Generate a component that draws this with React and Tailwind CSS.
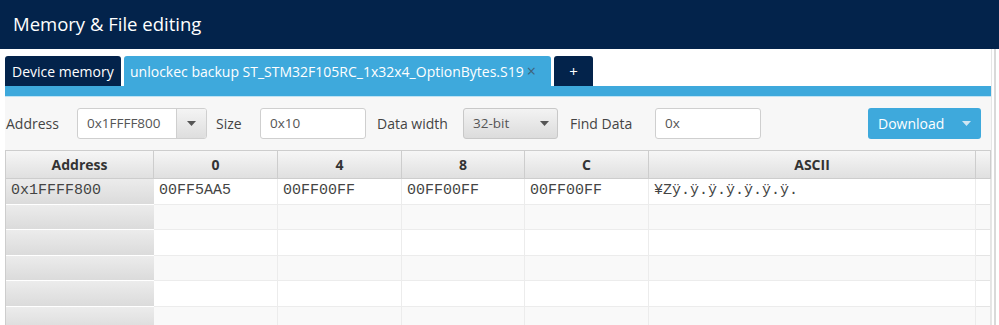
import React from 'react';

const cols = [
  { key: 'addr', label: 'Address', w: 'w-[148px]' },
  { key: 'c0', label: '0', w: 'w-[124px]' },
  { key: 'c4', label: '4', w: 'w-[124px]' },
  { key: 'c8', label: '8', w: 'w-[123px]' },
  { key: 'cC', label: 'C', w: 'w-[124px]' },
  { key: 'ascii', label: 'ASCII', w: 'w-[327px]' },
];

const rows = [
  { addr: '0x1FFFF800', c0: '00FF5AA5', c4: '00FF00FF', c8: '00FF00FF', cC: '00FF00FF', ascii: '¥Zÿ.ÿ.ÿ.ÿ.ÿ.ÿ.ÿ.' },
  {}, {}, {}, {}, {},
];

const Caret = ({ className = '' }) => (
  <svg width="9" height="5" viewBox="0 0 9 5" className={className}>
    <path d="M0 0 H9 L4.5 5 Z" fill="currentColor" />
  </svg>
);

const App = () => {
  return (
    <div className="w-[999px] h-[325px] overflow-hidden bg-white font-['Open_Sans',sans-serif] text-[#333]">
      {/* Title bar */}
      <div className="h-[49px] bg-[#03234b] flex items-center pl-[13px]">
        <span className="text-white text-[18.5px] leading-none">Memory &amp; File editing</span>
      </div>

      <div className="flex h-[276px] overflow-hidden">
        <div className="w-[991px] pl-[5px] flex flex-col">
          {/* Tabs */}
          <div className="shrink-0 flex items-end gap-[3px] pt-[7px] h-[37px]">
            <div className="h-[30px] w-[116px] bg-[#03234b] rounded-t-[3px] text-white text-[14px] flex items-center pl-[7px]">
              Device memory
            </div>
            <div className="h-[30px] w-[427px] bg-[#3ea9dc] rounded-t-[3px] text-white text-[14px] flex items-center pl-[6px] gap-[3px]">
              <span>unlockec backup ST_STM32F105RC_1x32x4_OptionBytes.S19</span>
              <span className="text-[#40627a] text-[16px] leading-none">×</span>
            </div>
            <div className="h-[30px] w-[39px] bg-[#03234b] rounded-t-[3px] text-white text-[15px] flex items-center justify-center">
              +
            </div>
          </div>
          <div className="shrink-0 h-[11px] bg-[#3ea9dc] border-b border-[#bfe3f4]" />

          {/* Toolbar + table area */}
          <div className="shrink-0 flex-1 bg-[#f7f7f7]">
            <div className="flex items-center h-[31px] mt-[11px] text-[14px] text-[#444]">
              <span className="ml-[1px] w-[71px]">Address</span>
              <div className="flex h-[31px] w-[130px] bg-white border border-[#cfcfcf] rounded-[3px] overflow-hidden">
                <div className="flex-1 flex items-center pl-[9px] text-[13.5px] text-[#555]">0x1FFFF800</div>
                <div className="w-[30px] border-l border-[#cfcfcf] bg-gradient-to-b from-[#f4f4f4] to-[#dedede] flex items-center justify-center text-[#555]">
                  <Caret />
                </div>
              </div>
              <span className="ml-[9px] w-[44px]">Size</span>
              <div className="h-[31px] w-[106px] bg-white border border-[#cfcfcf] rounded-[3px] flex items-center pl-[9px] text-[13.5px] text-[#555]">0x10</div>
              <span className="ml-[11px] w-[86px]">Data width</span>
              <div className="h-[31px] w-[95px] border border-[#c8c8c8] rounded-[3px] bg-gradient-to-b from-[#f3f3f3] to-[#dcdcdc] flex items-center justify-between pl-[9px] pr-[8px] text-[13.5px] text-[#555]">
                <span>32-bit</span>
                <Caret />
              </div>
              <span className="ml-[12px] w-[85px]">Find Data</span>
              <div className="h-[31px] w-[106px] bg-white border border-[#cfcfcf] rounded-[3px] flex items-center pl-[9px] text-[13.5px] text-[#555]">0x</div>
              <div className="ml-[107px] h-[31px] w-[113px] bg-[#3ea9dc] rounded-[3px] flex items-center justify-between pl-[10px] pr-[10px] text-white text-[14px]">
                <span>Download</span>
                <Caret className="text-[#cfe6f3]" />
              </div>
            </div>

            {/* Table */}
            <div className="mt-[11px] border border-[#cdcdcd] border-r-0 w-[986px]">
              <div className="flex h-[28px] bg-gradient-to-b from-[#f6f6f6] to-[#e0e0e0] border-b border-[#cdcdcd]">
                {cols.map((c) => (
                  <div key={c.key} className={`${c.w} border-r border-[#cdcdcd] flex items-center justify-center font-bold text-[14px] text-[#333]`}>
                    {c.label}
                  </div>
                ))}
                <div className="flex-1 border-r border-[#cdcdcd]" />
              </div>
              {rows.map((r, i) => (
                <div key={i} className={`flex h-[25.5px] ${i % 2 === 0 ? 'bg-white' : 'bg-[#f9f9f9]'}`}>
                  {cols.map((c) =>
                    c.key === 'addr' ? (
                      <div key={c.key} className="w-[148px] bg-gradient-to-b from-[#ececec] to-[#dbdbdb] border-b border-white flex items-center pl-[5px] font-['Liberation_Mono',monospace] text-[15px] text-[#444]">
                        {r.addr}
                      </div>
                    ) : (
                      <div key={c.key} className={`${c.w} border-r border-b border-[#ececec] flex items-center pl-[5px] font-['Liberation_Mono',monospace] text-[15px] text-[#444] whitespace-pre`}>
                        {r[c.key]}
                      </div>
                    )
                  )}
                  <div className="flex-1 border-r border-b border-[#e4e4e4]" />
                </div>
              ))}
            </div>
          </div>
        </div>
        <div className="flex-1 bg-white border-l border-[#e6e6e6] flex">
          <div className="w-[2px] bg-[#d9d9d9] ml-[2px]" />
        </div>
      </div>
    </div>
  );
};

export default App;
